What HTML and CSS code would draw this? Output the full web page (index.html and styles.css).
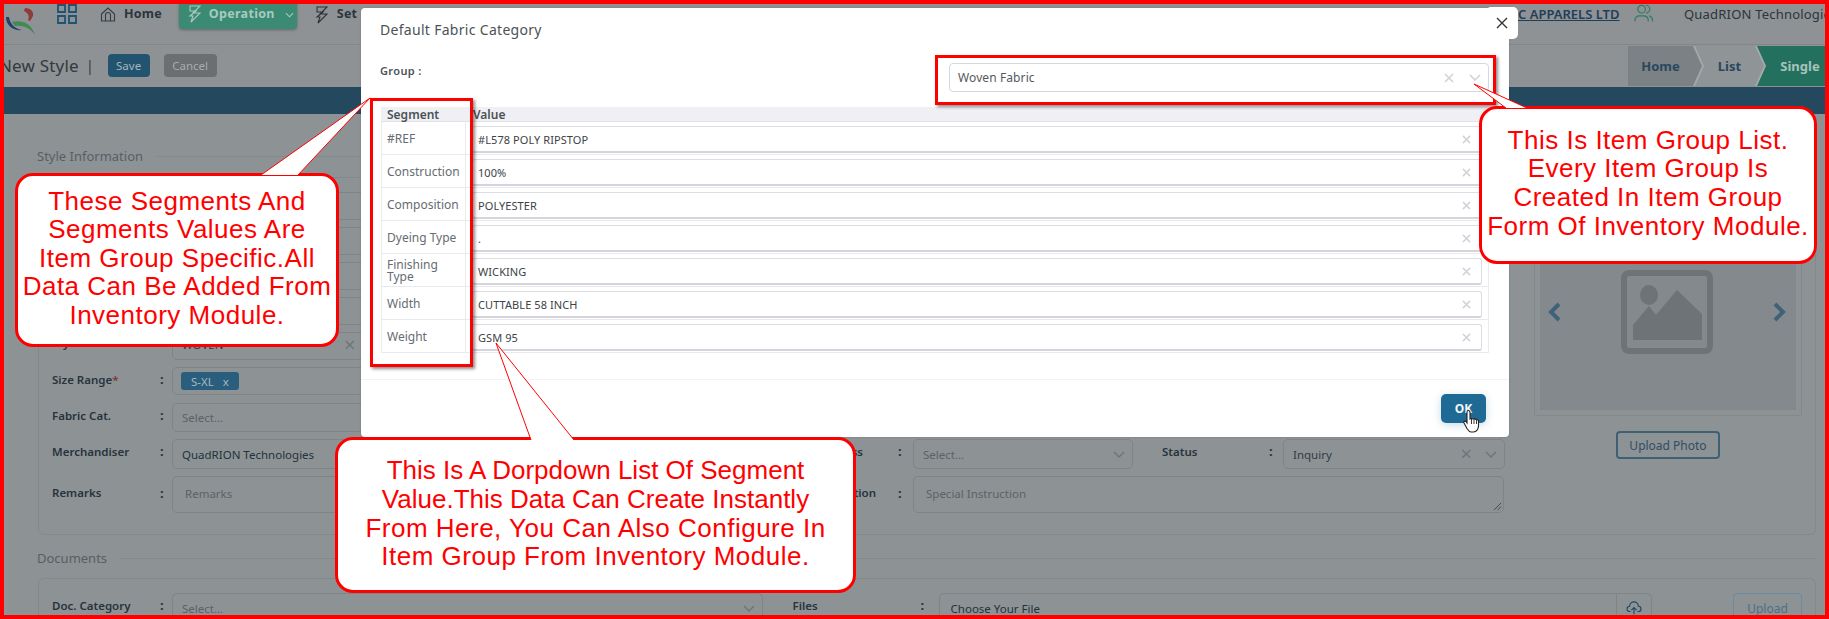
FILE: index.html
```html
<!DOCTYPE html>
<html lang="en">
<head>
<meta charset="utf-8">
<title>New Style</title>
<link rel="stylesheet" href="styles.css">
</head>
<body>
<div class="page">
  <div class="app">
    <header class="topbar">
      <svg class="logo" viewBox="0 0 36 36"><path d="M24 8c6 0 9 4 8 8l-3 5-2-1c2-4 0-7-4-9z" fill="#8e3b3a"/><path d="M5 17c0 9 8 14 16 13-6-1-12-5-13-13z" fill="#23406b"/><path d="M11 22c8-2 19 0 23 13-5-7-12-10-20-9z" fill="#3f8a55"/></svg>
      <svg class="grid-icon" viewBox="0 0 20 20"><path d="M1 1h7v7H1zM12 1h7v7h-7zM1 12h7v7H1zM12 12h7v7h-7z" fill="none" stroke="#1f5374" stroke-width="1.8"/></svg>
      <svg class="home-icon" viewBox="0 0 16 16"><path d="M1.5 7.5 8 1.5l6.500 6v7h-13zM5.500 14.500V8.500a2.500 2.500 0 0 1 5 0v6" fill="none" stroke="#353d42" stroke-width="1.100"/></svg>
      <span class="nav-home">Home</span>
      <div class="nav-active">
        <svg class="nav-glyph" viewBox="0 0 14 18"><path d="M2 1h10L5 8h7L3 17l2-6H2l6-5H2z" fill="none" stroke="#a9c9bd" stroke-width="1.100"/></svg>
        <span>Operation</span>
        <svg class="nav-chev" viewBox="0 0 10 6"><path d="M1 1l4 4 4-4" fill="none" stroke="#a9c9bd" stroke-width="1.200"/></svg>
      </div>
      <svg class="nav-glyph set-glyph" viewBox="0 0 14 18"><path d="M2 1h10L5 8h7L3 17l2-6H2l6-5H2z" fill="none" stroke="#2c3338" stroke-width="1.100"/></svg>
      <span class="nav-home">Set</span>
      <div class="top-right">
        <span class="company">C APPARELS LTD</span>
        <svg class="users-icon" viewBox="0 0 20 20"><circle cx="8" cy="6" r="4" fill="none" stroke="#2f7a63" stroke-width="1.200"/><path d="M12.500 1.800a4 4 0 0 1 0 8.200M1 19v-1c0-3 2-5 5-5h4c3 0 5 2 5 5v1M16 13c2 .5 3.500 2.500 3.500 5v1" fill="none" stroke="#2f7a63" stroke-width="1.200"/></svg>
        <span class="user-name">QuadRION Technologies</span>
      </div>
    </header>

    <div class="subbar">
      <span class="page-title">New Style</span>
      <span class="page-sep">|</span>
      <button class="btn-save">Save</button>
      <button class="btn-cancel">Cancel</button>
      <nav class="crumbs">
        <span class="crumb crumb-home">Home</span>
        <span class="crumb crumb-list">List</span>
        <span class="crumb crumb-single">Single</span>
      </nav>
    </div>
    <div class="navy-strip"></div>

    <main class="card">
      <div class="legend legend-style">Style Information</div>
      <section class="box box-style">
        <div class="form">
          <div class="row"><div class="field f1"><label></label><i></i><div class="ctl"></div></div></div>
          <div class="row"><div class="field f1"><label></label><i></i><div class="ctl"></div></div></div>
          <div class="row"><div class="field f1"><label></label><i></i><div class="ctl"></div></div></div>
          <div class="row"><div class="field f1"><label></label><i></i><div class="ctl"></div></div></div>
          <div class="row row-fabric"><div class="field f1"><label>Style Of Fabric</label><i>:</i><div class="ctl"><span class="val val-up">WOVEN</span><span class="x-at-edge">×</span></div></div></div>
          <div class="row"><div class="field f1"><label>Size Range<b>*</b></label><i>:</i><div class="ctl"><span class="tag">S-XL<em>x</em></span></div></div></div>
          <div class="row row-wide"><div class="field f1"><label>Fabric Cat.</label><i>:</i><div class="ctl"><span class="ph">Select...</span></div></div></div>
          <div class="row row-tall">
            <div class="field f1"><label>Merchandiser</label><i>:</i><div class="ctl"><span class="val val-dark">QuadRION Technologies</span></div></div>
            <div class="field f2"><label class="lab-process">Process</label><i>:</i><div class="ctl"><span class="ph">Select...</span><svg class="chev" viewBox="0 0 12 7"><path d="M1 1l5 5 5-5" fill="none" stroke="#6f767a" stroke-width="1.500"/></svg></div></div>
            <div class="field f3"><label>Status</label><i>:</i><div class="ctl"><span class="val">Inquiry</span><span class="ctl-x">×</span><svg class="chev" viewBox="0 0 12 7"><path d="M1 1l5 5 5-5" fill="none" stroke="#6f767a" stroke-width="1.500"/></svg></div></div>
          </div>
          <div class="row row-area">
            <div class="field f1"><label>Remarks</label><i>:</i><div class="ctl ctl-area"><span class="ph">Remarks</span></div></div>
            <div class="field f2 f2-long"><label class="lab-special">Special Instruction</label><i>:</i><div class="ctl ctl-area"><span class="ph">Special Instruction</span><svg class="grip" viewBox="0 0 10 10"><path d="M1 9l8-8M5 9l4-4" stroke="#3f4548" stroke-width="1"/></svg></div></div>
          </div>
        </div>
        <aside class="photo">
          <div class="frame">
            <div class="frame-in">
              <svg class="arrow" viewBox="0 0 14 20"><path d="M11 2 3 10l8 8" fill="none" stroke="#3f6278" stroke-width="4"/></svg>
              <svg class="pic" viewBox="0 0 92 84"><rect x="3" y="3" width="86" height="78" rx="5" fill="none" stroke="#6d7376" stroke-width="6"/><ellipse cx="28" cy="25" rx="9" ry="10" fill="#6d7376"/><path d="M12 70V55l16-19 7 9 21-25 25 24v26z" fill="#6d7376"/></svg>
              <svg class="arrow" viewBox="0 0 14 20"><path d="M3 2l8 8-8 8" fill="none" stroke="#3f6278" stroke-width="4"/></svg>
            </div>
          </div>
          <button class="btn-outline">Upload Photo</button>
        </aside>
      </section>

      <div class="legend legend-docs">Documents</div>
      <section class="box box-docs">
        <div class="field f1"><label>Doc. Category</label><i>:</i><div class="ctl"><span class="ph">Select...</span><svg class="chev" viewBox="0 0 12 7"><path d="M1 1l5 5 5-5" fill="none" stroke="#6f767a" stroke-width="1.500"/></svg></div></div>
        <div class="field f-files"><label>Files</label><i>:</i><div class="ctl ctl-file"><span class="val val-dark">Choose Your File</span><span class="file-btn"><svg viewBox="0 0 18 16"><path d="M5 12H4a3 3 0 0 1 0-6 5 5 0 0 1 10 0 3 3 0 0 1 0 6h-1M9 15V8M6 10.500l3-3 3 3" fill="none" stroke="#1f4a66" stroke-width="1.300"/></svg></span></div></div>
        <button class="btn-outline btn-upload">Upload</button>
      </section>
    </main>
  </div>

  <div class="modal">
    <h2 class="modal-title">Default Fabric Category</h2>
    <div class="group-row">
      <span class="group-label">Group :</span>
      <div class="group-select">
        <span>Woven Fabric</span>
        <svg class="clear clear-group" viewBox="0 0 10 10"><path d="M1 1l8 8M9 1l-8 8"/></svg>
        <svg class="group-chev" viewBox="0 0 12 7"><path d="M1 1l5 5 5-5" fill="none" stroke="#cfd0d8" stroke-width="1.500"/></svg>
      </div>
    </div>
    <div class="seg-table">
      <div class="seg-head"><span class="seg-name">Segment</span><span class="seg-val-head">Value</span></div>
      <div class="seg-row"><span class="seg-name">#REF</span><div class="seg-cell"><div class="seg-input"><span>#L578 POLY RIPSTOP</span><svg class="clear" viewBox="0 0 10 10"><path d="M1 1l8 8M9 1l-8 8"/></svg></div></div></div>
      <div class="seg-row"><span class="seg-name">Construction</span><div class="seg-cell"><div class="seg-input"><span>100%</span><svg class="clear" viewBox="0 0 10 10"><path d="M1 1l8 8M9 1l-8 8"/></svg></div></div></div>
      <div class="seg-row"><span class="seg-name">Composition</span><div class="seg-cell"><div class="seg-input"><span>POLYESTER</span><svg class="clear" viewBox="0 0 10 10"><path d="M1 1l8 8M9 1l-8 8"/></svg></div></div></div>
      <div class="seg-row"><span class="seg-name">Dyeing Type</span><div class="seg-cell"><div class="seg-input"><span>.</span><svg class="clear" viewBox="0 0 10 10"><path d="M1 1l8 8M9 1l-8 8"/></svg></div></div></div>
      <div class="seg-row"><span class="seg-name seg-wrap">Finishing Type</span><div class="seg-cell"><div class="seg-input"><span>WICKING</span><svg class="clear" viewBox="0 0 10 10"><path d="M1 1l8 8M9 1l-8 8"/></svg></div></div></div>
      <div class="seg-row"><span class="seg-name">Width</span><div class="seg-cell"><div class="seg-input"><span>CUTTABLE 58 INCH</span><svg class="clear" viewBox="0 0 10 10"><path d="M1 1l8 8M9 1l-8 8"/></svg></div></div></div>
      <div class="seg-row"><span class="seg-name">Weight</span><div class="seg-cell"><div class="seg-input"><span>GSM 95</span><svg class="clear" viewBox="0 0 10 10"><path d="M1 1l8 8M9 1l-8 8"/></svg></div></div></div>
    </div>
    <div class="modal-foot"><button class="btn-ok">OK</button></div>
  </div>
  <button class="modal-close" aria-label="Close"><svg viewBox="0 0 12 12"><path d="M1 1l10 10M11 1 1 11" stroke="#333" stroke-width="1.400"/></svg></button>

  <svg class="cursor" viewBox="0 0 18 24"><path d="M5 1.500c1.500 0 2 1 2 2V10l1.500-.5 1 .5 1.500-.5 1.200.8 1.300-.3 2 1.500V17c0 3-2 6-5 6H8c-2 0-3-2-4-3.500L1 14c-.5-1 .5-2.500 2-1.500l1 1.500V3.500c0-1 .2-2 1-2z" fill="#fff" stroke="#222" stroke-width="1.100"/><path d="M8.500 10v5M11 10v5M13.500 11v4" stroke="#222" stroke-width=".9"/></svg>

  <div class="mark mark-group"></div>
  <div class="mark mark-seg"></div>

  <div class="callout callout-left"><p>These Segments And<br>Segments Values Are<br>Item Group Specific.All<br>Data Can Be Added From<br>Inventory Module.</p></div>
  <div class="callout callout-right"><p>This Is Item Group List.<br>Every Item Group Is<br>Created In Item Group<br>Form Of Inventory Module.</p></div>
  <div class="callout callout-bottom"><p><span class="tight">This Is A Dorpdown List Of Segment</span><br><span class="tight">Value.This Data Can Create Instantly</span><br>From Here, You Can Also Configure In<br>Item Group From Inventory Module.</p></div>

  <svg class="tails" viewBox="0 0 1829 619">
    <path d="M261 175 370 98 298 175" class="tail"/>
    <path d="M1506 108 1474 84 1527 108" class="tail"/>
    <path d="M531 440 496 343 574 440" class="tail"/>
  </svg>

  <div class="frame-red"></div>
</div>
</body>
</html>
```

FILE: styles.css
```css
* { box-sizing: border-box; }
html, body { margin: 0; padding: 0; overflow: hidden; }
body { font-family: "Noto Sans", "Open Sans", sans-serif; font-size: 11px; color: #2a353c; }
button { font-family: inherit; cursor: pointer; }
.page { position: relative; width: 1829px; height: 619px; overflow: hidden; }

.app { width: 100%; height: 100%; background: #8f9497; display: flex; flex-direction: column; overflow: hidden; }

.topbar { height: 45px; flex: none; border-bottom: 1px solid #83878a; background: #8e9295; display: flex; align-items: flex-start; position: relative; }
.logo { width: 36px; height: 36px; flex: none; margin-left: 1px; }
.grid-icon { width: 20px; height: 20px; flex: none; margin: 4px 0 0 20px; }
.home-icon { width: 16px; height: 17px; flex: none; margin: 6px 0 0 23px; }
.nav-home { font-size: 12.500px; font-weight: 700; line-height: 18px; margin: 5px 0 0 8px; color: #2a353c; letter-spacing: .2px; }
.nav-active { width: 118px; height: 29px; flex: none; margin-left: 17px; background: #3b8a74; border-radius: 0 0 4px 4px; color: #a9c9bd; font-weight: 700; font-size: 12.500px; display: flex; align-items: flex-start; padding: 5px 0 0 9px; line-height: 18px; box-shadow: 0 1px 3px rgba(0,0,0,.3); }
.nav-glyph { width: 14px; height: 18px; flex: none; margin-top: 0; }
.nav-active span { margin-left: 7px; letter-spacing: .3px; }
.nav-chev { width: 9px; height: 6px; margin: 7px 0 0 10px; flex: none; }
.set-glyph { margin: 6px 0 0 18px; }
.top-right { margin-left: auto; display: flex; align-items: flex-start; margin-right: -30px; width: 341px; padding-top: 5px; line-height: 18px; font-size: 13px; white-space: nowrap; }
.company { color: #1f3f58; font-weight: 600; font-size: 13px; text-decoration: underline; width: 116px; }
.users-icon { width: 19px; height: 20px; flex: none; margin-top: -2px; }
.user-name { margin-left: 31px; color: #2a353c; letter-spacing: .2px; }

.subbar { height: 42px; flex: none; display: flex; align-items: center; background: #8e9295; position: relative; }
.page-title { font-size: 17px; margin: -2px 0 0 -1px; color: #33393d; letter-spacing: .2px; }
.page-sep { font-size: 14px; margin: -2px 0 0 7px; color: #33393d; }
.btn-save, .btn-cancel { height: 23px; border: 0; border-radius: 4px; color: #a4b4bd; font-size: 11.500px; padding: 0; margin-top: -2px; }
.btn-save { width: 42px; background: #22546f; margin-left: 14px; }
.btn-cancel { width: 53px; background: #6b6f72; margin-left: 14px; color: #a8abac; }
.crumbs { margin-left: auto; align-self: flex-start; margin-top: 1px; display: flex; height: 40px; background: #a5a9ab; }
.crumb { height: 40px; flex: none; display: flex; align-items: center; justify-content: center; font-size: 13px; font-weight: 700; color: #28485e; }
.crumb-home { width: 74px; padding-right: 9px; background: #7c8185; clip-path: polygon(0 0, calc(100% - 9px) 0, 100% 50%, calc(100% - 9px) 100%, 0 100%); }
.crumb-list { width: 69px; margin-left: -7px; background: #8f9497; clip-path: polygon(0 0, calc(100% - 9px) 0, 100% 50%, calc(100% - 9px) 100%, 0 100%, 9px 50%); }
.crumb-single { width: 72px; margin-left: -7px; padding-left: 14px; background: #24705f; color: #a5c4bb; clip-path: polygon(0 0, 100% 0, 100% 100%, 0 100%, 9px 50%); }

.navy-strip { height: 27px; flex: none; background: #24495f; }

.card { flex: 1; margin-left: 7px; background: #8d9295; border-radius: 6px 0 0 0; padding: 33px 13px 0 31px; min-height: 0; }
.legend { height: 18px; line-height: 18px; display: flex; align-items: center; font-size: 13px; color: #585f64; white-space: nowrap; margin-left: -1px; }
.legend::after { content: ""; flex: 1; height: 1px; background: #83888b; margin-left: 14px; }
.box { border: 1px solid #83888b; border-radius: 6px; }
.box-style { height: 358px; margin-top: 12px; display: flex; padding: 14px 13px 0 13px; }
.form { width: 1453px; flex: none; display: flex; flex-direction: column; gap: 7px; }
.row { display: flex; height: 28px; flex: none; }
.row-wide { height: 29px; margin-top: 1px; }
.row-tall { height: 30px; }
.row-area { height: 37px; }
.field { display: flex; height: 100%; }
.field label { font-weight: 600; font-size: 11.500px; color: #27343c; line-height: 25px; white-space: nowrap; flex: none; }
.field label b { color: #7a3a3a; font-weight: 600; }
.field i { font-style: normal; font-weight: 700; font-size: 13px; line-height: 25px; flex: none; color: #27343c; }
.row-area label, .row-area i { line-height: 34px; }
.row-fabric label, .row-fabric i { line-height: 21px; }
.f1 { width: 711px; }
.f1 label { width: 108px; }
.f1 i { width: 12px; }
.f2 { width: 340px; margin-left: 30px; }
.f2 label { width: 105px; display: flex; justify-content: flex-end; }
.lab-process { padding-right: 35px; }
.lab-special { padding-right: 22px; }
.f2 i { width: 15px; }
.f2-long { width: 711px; }
.f3 { width: 343px; margin-left: 29px; }
.f3 label { width: 107px; }
.f3 i { width: 14px; }
.ctl { flex: 1; height: 100%; border: 1px solid #7f8487; border-radius: 5px; display: flex; align-items: center; padding-left: 9px; position: relative; min-width: 0; font-size: 11.500px; }
.ctl-area { padding: 9px 0 0 12px; align-items: flex-start; }
.val { color: #2f3c44; }
.val-up { margin-top: -4px; }
.val-dark { color: #22323d; }
.ph { color: #5a6367; }
.x-at-edge { position: absolute; left: 171px; top: 0; font-size: 20px; line-height: 24px; color: #6f767a; }
.tag { height: 18px; width: 58px; border-radius: 3px; background: #2b5e7c; color: #a4b8c3; display: flex; align-items: center; justify-content: center; gap: 9px; margin-left: -1px; }
.tag em { font-style: normal; }
.chev { width: 12px; height: 7px; margin-left: auto; margin-right: 7px; flex: none; }
.ctl-x { margin-left: auto; margin-right: 13px; font-size: 20px; color: #6f767a; line-height: 1; }
.ctl-x + .chev { margin-left: 0; }
.grip { width: 9px; height: 9px; position: absolute; right: 1px; bottom: 1px; }

.photo { width: 268px; margin-left: 29px; flex: none; margin-top: 14px; display: flex; flex-direction: column; align-items: center; }
.frame { width: 100%; height: 210px; flex: none; border: 1px solid #83888b; padding: 0 5px 5px; }
.frame-in { height: 100%; border: 1px solid #83888b; border-top: 0; background: #83898c; display: flex; align-items: center; justify-content: space-between; padding: 7px 9px 0 7px; }
.arrow { width: 14px; height: 20px; flex: none; }
.pic { width: 92px; height: 84px; flex: none; }
.btn-outline { background: transparent; border: 2px solid #3d6076; border-radius: 4px; color: #2e4f66; font-size: 12px; padding: 0; }
.photo .btn-outline { width: 104px; height: 28px; margin-top: 15px; }

.legend-docs { margin-top: 14px; }
.box-docs { margin-top: 11px; height: 60px; padding: 14px 13px 0 13px; display: flex; }
.box-docs .field { height: 30px; }
.f-files { width: 860px; margin-left: 30px; }
.f-files label { width: 128px; }
.f-files i { width: 18px; }
.ctl-file { padding-left: 11px; }
.file-btn { position: absolute; right: 0; top: 0; bottom: 0; width: 35px; border-left: 1px solid #7f8487; display: flex; align-items: center; justify-content: center; }
.file-btn svg { width: 16px; height: 14px; }
.btn-upload { width: 69px; height: 30px; margin-left: 81px; flex: none; border-color: #6a8aa0; border-width: 1.500px; color: #4e6f86; }

.modal { position: absolute; left: 361px; top: 8px; width: 1148px; height: 429px; background: #fff; border-radius: 4px; padding: 0 20px; display: flex; flex-direction: column; color: #555; box-shadow: 0 0 2px rgba(0,0,0,.2); }
.modal-title { margin: 12px 0 0 -1px; font-size: 14px; font-weight: 400; line-height: 19px; color: #4b5257; letter-spacing: .3px; }
.group-row { display: flex; justify-content: space-between; margin-top: 24px; height: 29px; flex: none; }
.group-label { font-weight: 600; font-size: 11px; color: #4b5257; line-height: 16px; margin-left: -1px; letter-spacing: .35px; }
.group-select { width: 540px; height: 29px; border: 1px solid #d6d7e0; border-radius: 4px; display: flex; align-items: center; padding: 0 7px 0 8px; font-size: 12px; color: #55595e; letter-spacing: .1px; }
.group-select span { flex: 1; }
.clear { width: 9px; height: 9px; flex: none; fill: none; stroke: #d3d3da; stroke-width: 1.700; margin-right: 10px; }
.clear-group { margin-right: 15px; width: 10px; height: 10px; }
.group-chev { width: 12px; height: 7px; flex: none; }
.seg-table { margin-top: 15px; border-right: 1px solid #ebebf0; flex: none; }
.seg-head { height: 15px; background: #f0f0f4; display: flex; align-items: center; font-weight: 600; font-size: 12px; color: #4b5257; border-bottom: 1px solid #e2e2e8; }
.seg-head .seg-name { height: 100%; border: 0; padding-left: 6px; font-size: 12px; font-weight: 600; line-height: 15px; color: #4b5257; }
.seg-val-head { padding-left: 7px; }
.seg-name { width: 85px; flex: none; padding: 0 5px; font-size: 12px; color: #666c72; border-left: 1px solid #ebebf0; border-right: 1px solid #ebebf0; line-height: 13px; align-self: stretch; display: flex; align-items: center; }
.seg-wrap { padding: 2px 20px 0 5px; line-height: 12.500px; }
.seg-row { height: 33px; display: flex; border-bottom: 1px solid #e9e9ee; }
.seg-cell { flex: 1; padding: 4px 6px 0; }
.seg-input { height: 27px; border: 1px solid #dcdce4; border-bottom: 2px solid #d4d4dc; border-radius: 3px; display: flex; align-items: center; padding-left: 5px; font-size: 11px; color: #3c4246; letter-spacing: .08px; }
.seg-input span { flex: 1; }
.modal-foot { margin: 26px -20px 0; flex: 1; border-top: 1px solid #f3f3f5; display: flex; justify-content: flex-end; padding: 14px 23px 0 0; align-items: flex-start; }
.btn-ok { width: 45px; height: 29px; border: 0; border-radius: 5px; background: #1f6a94; color: #f1f5f7; font-weight: 700; font-size: 12px; padding: 0; box-shadow: 0 2px 8px rgba(31,106,148,.25); }
.modal-close { position: absolute; left: 1486px; top: 7px; width: 32px; height: 32px; border: 0; background: #fff; border-radius: 5px; padding: 0; display: flex; align-items: center; justify-content: center; }
.modal-close svg { width: 12px; height: 12px; }

.cursor { position: absolute; left: 1463px; top: 409px; width: 18px; height: 24px; }

.mark { position: absolute; border: 3px solid #f00; box-shadow: 2px 2px 3px rgba(0,0,0,.45); }
.mark-group { left: 935px; top: 55px; width: 561px; height: 50px; }
.mark-seg { left: 370px; top: 98px; width: 103px; height: 269px; }

.tails { position: absolute; left: 0; top: 0; width: 1829px; height: 619px; pointer-events: none; }
.tail { fill: #fff; stroke: #f00; stroke-width: 1; }
.callout { position: absolute; background: #fff; border: 3px solid #f00; border-radius: 18px; color: #f00; font-family: "Liberation Sans", Arial, sans-serif; font-size: 26px; line-height: 28.600px; text-align: center; white-space: nowrap; letter-spacing: .5px; display: flex; align-items: center; justify-content: center; }
.callout p { margin: 0; }
.tight { letter-spacing: 0; }
.callout-left { left: 15px; top: 173px; width: 324px; height: 174px; padding-bottom: 4px; }
.callout-right { left: 1479px; top: 106px; width: 338px; height: 158px; padding-bottom: 4px; }
.callout-bottom { left: 335px; top: 437px; width: 521px; height: 156px; padding-bottom: 3px; }

.frame-red { position: absolute; inset: 0; border: 4px solid #f00; pointer-events: none; }
```
